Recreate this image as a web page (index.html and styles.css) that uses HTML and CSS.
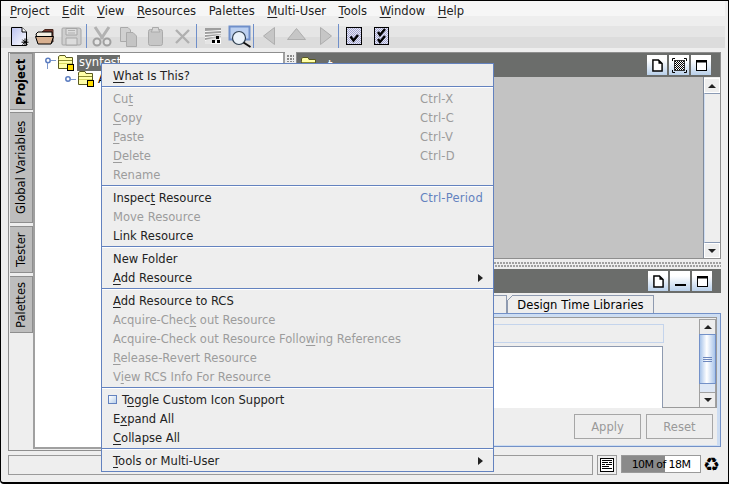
FILE: index.html
```html
<!DOCTYPE html>
<html lang="en">
<head>
<meta charset="utf-8">
<title>Project</title>
<link rel="stylesheet" href="styles.css">
</head>
<body>
<svg class="defs" width="0" height="0" aria-hidden="true">
  <defs>
    <pattern id="dither" width="2" height="2" patternUnits="userSpaceOnUse">
      <rect width="2" height="2" fill="#e8e9f6"/>
      <rect width="1" height="1" fill="#a4a6d0"/>
      <rect x="1" y="1" width="1" height="1" fill="#a4a6d0"/>
    </pattern>
    <pattern id="dark-dither" width="2" height="2" patternUnits="userSpaceOnUse">
      <rect width="2" height="2" fill="#fff"/>
      <rect width="1" height="1" fill="#000"/>
      <rect x="1" y="1" width="1" height="1" fill="#000"/>
    </pattern>
    <linearGradient id="page-fill" x1="0" y1="0" x2="1" y2="1">
      <stop offset="0" stop-color="#b9c0ee"/>
      <stop offset="1" stop-color="#ffffff"/>
    </linearGradient>
    <symbol id="folder" viewBox="0 0 16 16">
      <path d="M0.5 4.5V1.5L2 0.5H7L8 2.5H14.5V13.5H0.5Z" fill="#ffffa8" stroke="#5a5a20"/>
      <path d="M1 5.5H14" stroke="#8a8a30"/>
      <path d="M1 8.5H14" stroke="#d8d860"/>
      <rect x="9.5" y="9.5" width="6" height="6" fill="#ffdc00" stroke="#000"/>
    </symbol>
    <symbol id="doc-glyph" viewBox="0 0 12 14">
      <path d="M1 1H7L11 5V13H1Z" fill="#fff" stroke="#000" stroke-width="1.6"/>
      <path d="M7 1L11 5H7Z" fill="#000"/>
    </symbol>
  </defs>
</svg>
<div class="window">
  <header class="chrome">
    <nav class="menubar">
      <span class="menu-title"><u>P</u>roject</span>
      <span class="menu-title"><u>E</u>dit</span>
      <span class="menu-title"><u>V</u>iew</span>
      <span class="menu-title"><u>R</u>esources</span>
      <span class="menu-title">Palettes</span>
      <span class="menu-title"><u>M</u>ulti-User</span>
      <span class="menu-title"><u>T</u>ools</span>
      <span class="menu-title"><u>W</u>indow</span>
      <span class="menu-title"><u>H</u>elp</span>
    </nav>
    <div class="toolbar">
      <svg class="t-a" viewBox="7 24 26 24"><path d="M11.5 27.5H22L26.5 32V45.5H11.5Z" fill="url(#page-fill)" stroke="#000"/><path d="M22 27.5V32H26.5" fill="#fff" stroke="#000"/><path d="M25 38.5V46M21.5 42.2H28.5M22.5 39.7L27.5 44.7M27.5 39.7L22.5 44.7" stroke="#000" stroke-width="1"/></svg>
      <svg class="t-b" viewBox="33 24 25 24"><path d="M42 32L45 29.5H53V42" fill="#7a3a30" stroke="#4a2a20"/><path d="M36 34L38 32H52V43H38Z" fill="#f4efe2" stroke="#000"/><path d="M35.5 36.5H50L53.5 36.5L51 44H38Z" fill="#d8b090" stroke="#000"/></svg>
      <svg class="t-c" viewBox="58 24 28 24"><path d="M63 28H79Q81 28 81 30V44Q81 45 79 45H63Q62 45 62 44V29Q62 28 63 28Z" fill="#cfcfcf" stroke="#a6a6a6"/><path d="M66 28.5H77V35H66ZM66 38H77V45H66Z" fill="#dcdcdc" stroke="#a6a6a6"/><path d="M68 30.500H75M68 33H75" stroke="#b0b0b0"/></svg>
      <i class="sep-v"></i>
      <svg class="t-d" viewBox="87 24 29 24"><path d="M95 27L103 39M109 27L101 39" stroke="#b2b2b2" stroke-width="3"/><circle cx="97" cy="42" r="3.500" fill="#e6e6e6" stroke="#a0a0a0" stroke-width="2"/><circle cx="107" cy="42" r="3.500" fill="#e6e6e6" stroke="#a0a0a0" stroke-width="2"/></svg>
      <svg class="t-e" viewBox="116 24 25 24"><path d="M120.500 27.500H128L130.500 30V41.500H120.500Z" fill="#d0d0d0" stroke="#aaa"/><path d="M126.500 32.500H133L136.500 36V46.500H126.500Z" fill="#c4c4c4" stroke="#aaa"/></svg>
      <svg class="t-f" viewBox="141 24 29 24"><rect x="148.500" y="29.500" width="14" height="16" rx="2" fill="#c6c6c6" stroke="#aaa"/><path d="M152.500 29.500V27.500H158.500V29.500L160 32H151Z" fill="#d6d6d6" stroke="#aaa"/></svg>
      <svg class="t-g" viewBox="170 24 25 24"><path d="M176 30L189 43M189 30L176 43" stroke="#b0b0b0" stroke-width="2.400"/></svg>
      <i class="sep-w"></i>
      <svg class="t-h" viewBox="198 24 30 24"><path d="M205 28H221V44H205Z" fill="#fff"/><path d="M205 28H221V30L205 31ZM205 32L221 31V33L205 34ZM205 35L221 34V35L205 37ZM205 38L221 36V37L205 40Z" fill="#9e9e9e"/><path d="M205 41L221 33V38L210 44H205Z" fill="#d4d4d4" opacity=".6"/><rect x="216" y="36" width="3" height="3" fill="#000"/><rect x="212" y="40" width="3" height="3" fill="#000"/><rect x="217" y="40" width="3" height="3" fill="#000"/></svg>
      <svg class="t-i" viewBox="228 24 24 24"><rect x="229.500" y="26.500" width="20" height="13" fill="#bcd0f0" stroke="#6f8fca" stroke-width="2"/><circle cx="239" cy="38" r="6.500" fill="#eaf2fa" stroke="#2f3f50" stroke-width="1.200"/><path d="M243.500 42.500L250.500 47" stroke="#111" stroke-width="2"/></svg>
      <i class="sep-w"></i>
      <svg class="t-j" viewBox="255 24 28 24"><path d="M274.500 27.500V44.500L263.500 36Z" fill="#c6c6c6" stroke="#aeaeae"/></svg>
      <svg class="t-k" viewBox="283 24 27 24"><path d="M287.500 39.500H305.500L296.500 28.500Z" fill="#c6c6c6" stroke="#aeaeae"/></svg>
      <svg class="t-l" viewBox="310 24 27 24"><path d="M320.500 27.500V44.500L331.500 36Z" fill="#c6c6c6" stroke="#aeaeae"/></svg>
      <i class="sep-w"></i>
      <svg class="t-m" viewBox="340 24 28 24"><rect x="346.500" y="27.500" width="15" height="17" fill="url(#dither)" stroke="#000"/><path d="M350.500 36.500L353.500 40.500L358 35" fill="none" stroke="#000" stroke-width="2.400"/></svg>
      <svg class="t-n" viewBox="368 24 28 24"><rect x="374.500" y="27.500" width="14" height="17" fill="url(#dither)" stroke="#000"/><path d="M378 32L380 35L385 29M378 39L380 42L385 36" fill="none" stroke="#000" stroke-width="2.400"/></svg>
    </div>
  </header>

  <main class="workspace">
    <section class="side">
      <div class="side-tabs">
        <div class="side-tab side-tab-project"><b>Project</b></div>
        <div class="side-tab side-tab-globals">Global Variables</div>
        <div class="side-tab side-tab-tester">Tester</div>
        <div class="side-tab side-tab-palettes">Palettes</div>
      </div>
      <div class="tree">
        <div class="tree-row">
          <svg class="tree-handle" viewBox="0 0 12 12"><circle cx="4" cy="3.500" r="2.200" fill="#fff" stroke="#5a7cc0" stroke-width="1.500"/><path d="M3.500 6V12M7 3.500H12" stroke="#7d97cc"/></svg>
          <svg class="tree-folder"><use href="#folder"/></svg>
          <span class="tree-label-selected">syntest</span>
        </div>
        <div class="tree-row tree-row-child">
          <svg class="tree-handle" viewBox="0 0 12 12"><circle cx="4" cy="6" r="2.200" fill="#fff" stroke="#5a7cc0" stroke-width="1.500"/><path d="M7 6.500H12" stroke="#7d97cc"/></svg>
          <svg class="tree-folder"><use href="#folder"/></svg>
          <span class="tree-label">A</span>
        </div>
      </div>
    </section>

    <div class="v-split"><i class="grip"></i></div>

    <section class="right">
      <div class="frame frame-top">
        <div class="titlebar">
          <svg class="title-folder"><use href="#folder"/></svg>
          <span class="title-text">t</span>
          <span class="title-btn"><svg class="g-doc"><use href="#doc-glyph"/></svg></span>
          <span class="title-btn"><svg class="g-dither" viewBox="0 0 15 15"><rect x="2.500" y="2.500" width="10" height="10" fill="url(#dark-dither)" stroke="#333"/><path d="M0.500 3V0.500H3M12 0.500H14.500V3M0.500 12V14.500H3M12 14.500H14.500V12" fill="none" stroke="#000"/></svg></span>
          <span class="title-btn"><svg class="g-win" viewBox="0 0 11 11"><rect x="0.500" y="0.500" width="10" height="10" fill="#fff" stroke="#000"/><rect x="0" y="0" width="11" height="2.500" fill="#000"/></svg></span>
        </div>
        <div class="frame-body">
          <div class="canvas"></div>
          <div class="scroll scroll-plain">
            <span class="scroll-btn"><i class="arrow-up"></i></span>
            <span class="scroll-track"></span>
            <span class="scroll-btn"><i class="arrow-down"></i></span>
          </div>
        </div>
      </div>

      <div class="h-split"></div>

      <div class="frame-lower">
        <div class="titlebar titlebar-lower">
          <span class="title-btn"><svg class="g-doc"><use href="#doc-glyph"/></svg></span>
          <span class="title-btn"><i class="g-min"></i></span>
          <span class="title-btn"><svg class="g-win" viewBox="0 0 11 11"><rect x="0.500" y="0.500" width="10" height="10" fill="#fff" stroke="#000"/><rect x="0" y="0" width="11" height="2.500" fill="#000"/></svg></span>
        </div>
        <div class="tabs">
          <span class="tab tab-prev">Properties</span>
          <span class="tab tab-active">Design Time Libraries</span>
        </div>
        <div class="pane">
          <div class="form">
            <div class="form-main">
              <div class="field"></div>
              <div class="text-box"></div>
            </div>
            <div class="scroll scroll-form">
              <span class="scroll-btn scroll-btn-small"><i class="arrow-up"></i></span>
              <span class="thumb"><i class="thumb-grip"></i></span>
              <span class="scroll-gap"></span>
              <span class="scroll-btn scroll-btn-small"><i class="arrow-down"></i></span>
            </div>
          </div>
          <div class="actions">
            <span class="action">Apply</span>
            <span class="action">Reset</span>
          </div>
        </div>
      </div>
    </section>
  </main>

  <footer class="status">
    <div class="status-msg"></div>
    <span class="log-btn"><svg viewBox="0 0 14 14"><rect x="0.500" y="0.500" width="13" height="13" fill="#fff" stroke="#000"/><path d="M2 2.500H12M2 4.500H8M9 4.500H12M2 6.500H5M6 6.500H12M2 8.500H9M2 10.500H12" stroke="#000"/></svg></span>
    <span class="memory">10M of 18M</span>
    <span class="recycle">♻</span>
  </footer>

  <div class="popup">
    <div class="group group-first">
      <div class="item"><span><u>W</u>hat Is This?</span></div>
    </div>
    <hr class="popup-sep">
    <div class="group">
      <div class="item off"><span>Cu<u>t</u></span><span class="keys">Ctrl-X</span></div>
      <div class="item off"><span><u>C</u>opy</span><span class="keys">Ctrl-C</span></div>
      <div class="item off"><span><u>P</u>aste</span><span class="keys">Ctrl-V</span></div>
      <div class="item off"><span><u>D</u>elete</span><span class="keys">Ctrl-D</span></div>
      <div class="item off"><span>Rename</span></div>
    </div>
    <hr class="popup-sep">
    <div class="group">
      <div class="item"><span>Inspec<u>t</u> Resource</span><span class="keys keys-on">Ctrl-Period</span></div>
      <div class="item off"><span>Move Resource</span></div>
      <div class="item"><span>Link Resource</span></div>
    </div>
    <hr class="popup-sep">
    <div class="group">
      <div class="item"><span>New Folder</span></div>
      <div class="item"><span><u>A</u>dd Resource</span><i class="submenu"></i></div>
    </div>
    <hr class="popup-sep">
    <div class="group">
      <div class="item"><span><u>A</u>dd Resource to RCS</span></div>
      <div class="item off"><span>Acquire-Chec<u>k</u> out Resource</span></div>
      <div class="item off"><span>Acquire-Check out Resource Follo<u>w</u>ing References</span></div>
      <div class="item off"><span><u>R</u>elease-Revert Resource</span></div>
      <div class="item off"><span>V<u>i</u>ew RCS Info For Resource</span></div>
    </div>
    <hr class="popup-sep">
    <div class="group">
      <div class="item item-check"><i class="check"></i><span>T<u>o</u>ggle Custom Icon Support</span></div>
      <div class="item"><span>E<u>x</u>pand All</span></div>
      <div class="item"><span><u>C</u>ollapse All</span></div>
    </div>
    <hr class="popup-sep">
    <div class="group">
      <div class="item"><span><u>T</u>ools or Multi-User</span><i class="submenu"></i></div>
    </div>
  </div>
</div>
</body>
</html>
```

FILE: styles.css
```css
* { box-sizing: border-box; }
html, body { margin: 0; padding: 0; }
body { width: 729px; height: 484px; overflow: hidden; font-family: "DejaVu Sans", sans-serif; font-size: 11.55px; color: #000; }
.defs { position: absolute; }
u { text-underline-offset: 2px; text-decoration-thickness: 1px; }
i { display: block; }

.window {
  position: relative;
  width: 729px;
  height: 484px;
  border: 1px solid #000;
  border-bottom-width: 2px;
  border-bottom-left-radius: 4px;
  background: #eee;
  display: flex;
  flex-direction: column;
  overflow: hidden;
}

.chrome {
  width: 724px;
  height: 47px;
  flex: none;
  background: linear-gradient(#f6f6f6 0 15px, #eeeeee 15px 25px, #e5e5e5 25px 36px, #dcdcdc 36px);
}
.menubar { height: 23px; display: flex; padding-left: 9px; gap: 12.6px; align-items: center; padding-bottom: 4px; }
.menu-title { color: #222; white-space: nowrap; }

.toolbar {
  height: 24px;
  padding-left: 6px;
  display: grid;
  grid-template-columns: 26px 25px 28px 1px 29px 25px 29px 25px 3px 30px 24px 3px 28px 27px 27px 3px 28px 28px;
  grid-template-rows: 24px;
}
.toolbar svg { width: 100%; height: 24px; display: block; }
.sep-v, .sep-w { height: 24px; position: relative; }
.sep-v { background: #6f8fca; }
.sep-w { background: linear-gradient(90deg, transparent 1px, #6f8fca 1px 2px, transparent 2px); }

.workspace { height: 399px; flex: none; margin-top: 4px; padding-left: 7px; display: flex; }

.side {
  width: 277px;
  height: 399px;
  flex: none;
  border: 1px solid #8e8e8e;
  border-right: 0;
  display: flex;
}
.side-tabs { width: 24px; flex: none; padding-left: 1px; display: flex; flex-direction: column; }
.side-tab {
  width: 23px;
  border: 1px solid #8e8e8e;
  border-right: 0;
  background: #bdbdbd;
  writing-mode: vertical-rl;
  transform: rotate(180deg);
  display: flex;
  align-items: center;
  justify-content: center;
}
.side-tab-project { height: 57px; }
.side-tab-globals { height: 111px; margin-top: 2px; }
.side-tab-tester { height: 47px; margin-top: 3px; }
.side-tab-palettes { height: 57px; margin-top: 3px; }

.tree { flex: 1; margin-bottom: 1px; border-left: 2px solid #a0a0a0; border-right: 2px solid #a0a0a0; border-bottom: 2px solid #a0a0a0; background: #fff; padding: 2px 0 0 9px; }
.tree-row { height: 16px; display: flex; align-items: center; }
.tree-row-child { padding-left: 20px; }
.tree-handle { width: 12px; height: 12px; flex: none; margin-right: 2px; }
.tree-folder { width: 16px; height: 16px; flex: none; }
.tree-label-selected { margin-left: 3px; background: #6b6d6b; color: #fff; padding: 0 2px; height: 16px; width: 43px; line-height: 15px; }
.tree-label { margin-left: 4px; }

.v-split { width: 11px; flex: none; padding: 3px 0 0 2px; }
.grip { width: 7px; height: 7px; background: radial-gradient(circle at 1px 1px, #8a8a8a 1px, transparent 1px) 0 0 / 3px 3px; }

.right { width: 425px; flex: none; display: flex; flex-direction: column; }
.frame { height: 207px; flex: none; border: 1px solid #8e8e8e; display: flex; flex-direction: column; }
.titlebar { height: 24px; flex: none; background: #6b6d6b; display: flex; align-items: center; justify-content: flex-end; gap: 2px; padding-right: 9px; color: #fff; }
.title-folder { width: 16px; height: 16px; margin-left: 4px; }
.title-text { margin-left: 9px; margin-right: auto; }
.title-btn { width: 20px; height: 20px; display: flex; align-items: center; justify-content: center; background: linear-gradient(#ffffff 0 25%, #b9d0ea); }
.g-doc { width: 11px; height: 13px; }
.g-dither { width: 15px; height: 15px; }
.g-win { width: 11px; height: 11px; }
.g-min { width: 11px; height: 2px; background: #000; margin-top: 8px; }

.frame-body { flex: 1; display: flex; min-height: 0; }
.canvas { flex: 1; background: #c3c3c3; }
.scroll { display: flex; flex-direction: column; }
.scroll-plain { width: 17px; border-left: 1px solid #808a9a; background: #eee; padding: 1px 0 0; }
.scroll-btn { height: 15px; flex: none; display: flex; align-items: center; justify-content: center; border: 1px solid #fff; background: #eee; }
.scroll-track { flex: 1; border-top: 1px solid #8a9ab4; border-bottom: 1px solid #8a9ab4; border-left: 1px solid #cddcf2; }
.arrow-up { width: 0; height: 0; border-left: 4px solid transparent; border-right: 4px solid transparent; border-bottom: 4px solid #222; }
.arrow-down { width: 0; height: 0; border-left: 4px solid transparent; border-right: 4px solid transparent; border-top: 4px solid #222; }

.h-split {
  height: 10px;
  flex: none;
  background: radial-gradient(circle at 1px 1px, #a0a0a0 0.8px, transparent 1px) 0 3px / 3px 3px repeat-x, radial-gradient(circle at 1px 1px, #a0a0a0 0.8px, transparent 1px) 1px 6px / 3px 3px repeat-x;
}

.frame-lower { flex: 1; display: flex; flex-direction: column; min-height: 0; }
.tabs { height: 20px; flex: none; padding-top: 2px; display: flex; justify-content: flex-end; padding-right: 67px; }
.tab { height: 18px; border: 1px solid #8e9ab0; border-bottom: 0; display: flex; align-items: center; justify-content: center; white-space: nowrap; }
.tab-prev { width: 100px; }
.tab-active { width: 147px; position: relative; letter-spacing: 0.05px; }
.tab-active::before {
  content: "";
  position: absolute;
  left: -1px;
  top: -1px;
  width: 6px;
  height: 6px;
  background: linear-gradient(135deg, #eee 0 46%, #8e9ab0 46% 58%, #eee 58%);
}

.pane {
  height: 134px;
  flex: none;
  border: 1px solid #7391c8;
  padding: 3px 3px 0 3px;
  box-shadow: inset 0 3px 0 #cdddf2, inset -3px 0 0 #cdddf2, inset 0 -1px 0 #cdddf2;
  display: flex;
  flex-direction: column;
}
.form { height: 91px; flex: none; border: 1px solid #9a9a9a; border-left: 0; display: flex; justify-content: space-between; padding-top: 1px; }
.form-main { flex: 1; padding: 5px 0 0 0; margin-right: 35px; }
.field { height: 19px; border: 1px solid #c4d4ec; }
.text-box { height: 62px; margin-top: 3px; margin-right: 1px; border: 1px solid #8e9ab0; border-bottom: 0; background: #fff; }
.scroll-form { width: 17px; height: 85px; }
.scroll-btn-small { height: 15px; border: 1px solid #a0a0a0; border-bottom: 0; }
.thumb { height: 50px; flex: none; border: 1px solid #7391c8; background: linear-gradient(90deg, #a8c4ea, #fff 45%, #a8c4ea); display: flex; align-items: center; justify-content: center; }
.thumb-grip { width: 9px; height: 5px; border-top: 1px solid #6e88be; border-bottom: 1px solid #6e88be; background: linear-gradient(#6e88be, #6e88be) center / 100% 1px no-repeat; }
.scroll-gap { height: 8px; flex: none; border-left: 1px solid #a0a0a0; border-right: 1px solid #a0a0a0; background: #dde7f5; }

.actions { flex: 1; display: flex; justify-content: flex-end; gap: 5px; padding: 6px 4px 0 0; align-items: flex-start; }
.action { width: 67px; height: 25px; border: 1px solid #a6a6a6; color: #999; display: flex; align-items: center; justify-content: center; }

.status { height: 20px; flex: none; margin-top: 4px; padding-left: 7px; display: flex; gap: 4px; }
.status-msg { width: 585px; height: 20px; border: 1px solid #9a9a9a; }
.log-btn { width: 20px; height: 20px; border: 1px solid #9a9a9a; display: flex; align-items: center; justify-content: center; }
.log-btn svg { width: 14px; height: 14px; }
.memory { width: 80px; height: 18px; border: 1px solid #9a9a9a; background: linear-gradient(90deg, #8a8a8a 55%, #fff 55%); display: flex; align-items: center; justify-content: center; font-size: 11px; letter-spacing: -0.6px; }
.recycle { font-size: 19px; font-weight: bold; line-height: 18px; margin-left: -2px; color: #000; }

.popup {
  position: absolute;
  left: 100px;
  top: 62px;
  width: 393px;
  height: 409px;
  border: 1px solid #6382bf;
  background: #eee;
  z-index: 2;
}
.group { padding: 0 0 1px; }
.group-first { padding-top: 2px; }
.popup-sep { height: 2px; margin: 0 0 1px; border: 0; border-top: 1px solid #6382bf; background: #fff; }
.item { height: 19px; display: flex; align-items: center; padding: 0 10px 0 11px; white-space: nowrap; color: #222; }
.item.off { color: #9c9c9c; }
.keys { margin-left: auto; width: 63px; color: #9c9c9c; letter-spacing: 0.2px; }
.keys-on { color: #6382bf; }
.submenu { margin-left: auto; width: 0; height: 0; border-top: 4px solid transparent; border-bottom: 4px solid transparent; border-left: 5px solid #222; }
.item-check { padding-left: 6px; }
.check { width: 9px; height: 9px; margin-right: 5px; border: 1px solid #6382bf; background: linear-gradient(135deg, #fff, #b9d0ea); }
```
